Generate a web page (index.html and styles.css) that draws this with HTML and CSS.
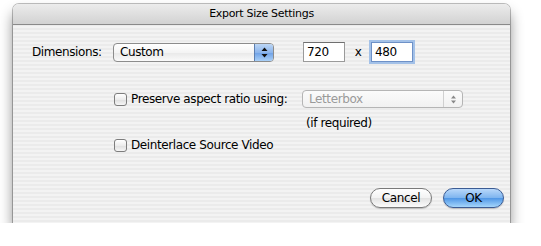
FILE: index.html
```html
<!DOCTYPE html>
<html lang="en">
<head>
    <meta charset="UTF-8">
    <title>Export Size Settings</title>
    <link rel="stylesheet" href="styles.css">
</head>
<body>

    <div class="window">
        <div class="titlebar">Export Size Settings</div>
        <div class="content">

            <div class="row row-size">
                <span class="label">Dimensions:</span>
                <div class="popup">
                    <span class="popup-text">Custom</span>
                    <span class="popup-arrows blue">
                        <svg width="7" height="11" viewBox="0 0 7 11"><path d="M3.5 0.5 L6.5 4 L0.5 4 Z M3.5 10.5 L6.5 7 L0.5 7 Z" fill="#111"/></svg>
                    </span>
                </div>
                <input class="field" type="text" value="720">
                <span class="times">x</span>
                <input class="field focused" type="text" value="480">
            </div>

            <div class="row row-aspect">
                <label class="check">
                    <span class="box"></span>
                    Preserve aspect ratio using:
                </label>
                <div class="popup disabled">
                    <span class="popup-text">Letterbox</span>
                    <span class="popup-arrows">
                        <svg width="7" height="11" viewBox="0 0 7 11"><path d="M3.5 1.5 L6 4.5 L1 4.5 Z M3.5 9.5 L6 6.5 L1 6.5 Z" fill="#888"/></svg>
                    </span>
                </div>
            </div>

            <div class="row row-note">(if required)</div>

            <div class="row row-deint">
                <label class="check">
                    <span class="box"></span>
                    Deinterlace Source Video
                </label>
            </div>

            <div class="row buttons">
                <button class="btn">Cancel</button>
                <button class="btn default">OK</button>
            </div>

        </div>
    </div>

</body>
</html>
```

FILE: styles.css
```css
* {
    margin: 0;
    padding: 0;
    box-sizing: border-box;
}

body {
    background-color: #fff;
    font-family: "DejaVu Sans", "Liberation Sans", sans-serif;
    font-size: 12px;
    letter-spacing: -0.4px;
    color: #000;
}

.window {
    width: 497px;
    height: 219px;
    margin: 4px 0 0 13px;
    border-radius: 6px 6px 0 0;
    background: repeating-linear-gradient(#ebebeb 0 2px, #f3f3f3 2px 4px);
    box-shadow: 0 0 0 1px rgba(0, 0, 0, 0.25), 0 9px 14px rgba(0, 0, 0, 0.45);
}

.titlebar {
    height: 21px;
    line-height: 20px;
    text-align: center;
    font-size: 11px;
    letter-spacing: -0.3px;
    border-radius: 6px 6px 0 0;
    background: linear-gradient(#ececec, #d2d2d2);
    border-bottom: 1px solid #8a8a8a;
}

.content {
    padding: 16px 6px 0 19px;
}

.row {
    display: flex;
    align-items: center;
}

.row-size {
    height: 22px;
}

.label {
    width: 81px;
}

.popup {
    display: flex;
    align-items: center;
    width: 161px;
    height: 19px;
    border: 1px solid #8c8c8c;
    border-radius: 4px;
    background: linear-gradient(#ffffff, #f4f4f4 50%, #e8e8e8 51%, #fafafa);
    overflow: hidden;
}

.popup-text {
    flex: 1;
    padding-left: 6px;
}

.popup-arrows {
    display: flex;
    align-items: center;
    justify-content: center;
    width: 19px;
    height: 100%;
    border-left: 1px solid #b8b8b8;
}

.popup-arrows.blue {
    border-left-color: #5d7fb0;
    background: linear-gradient(#bcd6f5, #8cb5ec 50%, #6da0e6 51%, #a9d0f8);
}

.popup.disabled {
    height: 18px;
    border-color: #b5b5b5;
    color: #9a9a9a;
    background: linear-gradient(#fbfbfb, #f1f1f1);
}

.popup.disabled .popup-arrows {
    border-left-color: #d0d0d0;
}

.field {
    width: 42px;
    height: 20px;
    padding-left: 3px;
    font: inherit;
    letter-spacing: inherit;
    border: 1px solid #9a9a9a;
    border-top-color: #6f6f6f;
    background-color: #fff;
    outline: none;
}

.row-size .field:first-of-type {
    margin-left: 29px;
}

.field.focused {
    border-color: #6e91c7;
    box-shadow: 0 0 0 2px #a3c1e8;
}

.times {
    width: 26px;
    text-align: center;
}

.row-aspect {
    height: 20px;
    margin-top: 26px;
    padding-left: 82px;
}

.check {
    display: flex;
    align-items: center;
    gap: 4px;
}

.row-aspect .check {
    width: 188px;
}

.box {
    width: 13px;
    height: 13px;
    border: 1px solid #7d7d7d;
    border-radius: 3px;
    background: linear-gradient(#ffffff, #ececec 50%, #dedede 51%, #f6f6f6);
}

.row-note {
    height: 14px;
    margin-top: 7px;
    padding-left: 274px;
}

.row-deint {
    height: 16px;
    margin-top: 7px;
    padding-left: 82px;
}

.buttons {
    justify-content: flex-end;
    gap: 11px;
    height: 20px;
    margin-top: 35px;
}

.btn {
    width: 62px;
    height: 20px;
    font: inherit;
    letter-spacing: inherit;
    font-size: 12px;
    color: #000;
    border: 1px solid #7a7a7a;
    border-radius: 10px;
    background: linear-gradient(#ffffff, #f2f2f2 50%, #e2e2e2 51%, #fbfbfb);
    box-shadow: 0 1px 1px rgba(0, 0, 0, 0.2);
}

.btn.default {
    width: 61px;
    border-color: #3c5c94;
    background: linear-gradient(#b9d8fa, #7db4ef 50%, #4f96e6 51%, #a5d6fb);
}
```
